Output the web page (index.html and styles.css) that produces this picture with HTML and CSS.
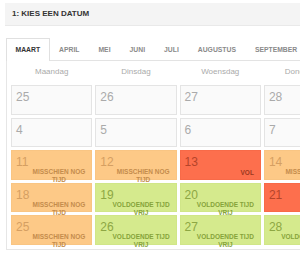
FILE: index.html
```html
<!DOCTYPE html>
<html lang="nl">
<head>
    <meta charset="UTF-8">
    <meta name="viewport" content="width=device-width, initial-scale=1.0">
    <title>Kies een datum</title>
    <link rel="stylesheet" href="styles.css">
</head>
<body>
    <div class="page">
        <div class="step-head">1: KIES EEN DATUM</div>
        <div class="months">
            <ul class="tabs">
                <li class="tab active">MAART</li>
                <li class="tab">APRIL</li>
                <li class="tab">MEI</li>
                <li class="tab">JUNI</li>
                <li class="tab">JULI</li>
                <li class="tab">AUGUSTUS</li>
                <li class="tab">SEPTEMBER</li>
            </ul>
            <div class="panel">
                <div class="cal">
                    <div class="dayname">Maandag</div>
                    <div class="dayname">Dinsdag</div>
                    <div class="dayname">Woensdag</div>
                    <div class="dayname">Donderdag</div>

                    <div class="day off"><span class="num">25</span></div>
                    <div class="day off"><span class="num">26</span></div>
                    <div class="day off"><span class="num">27</span></div>
                    <div class="day off"><span class="num">28</span></div>

                    <div class="day off"><span class="num">4</span></div>
                    <div class="day off"><span class="num">5</span></div>
                    <div class="day off"><span class="num">6</span></div>
                    <div class="day off"><span class="num">7</span></div>

                    <div class="day maybe"><span class="num">11</span><span class="label">MISSCHIEN NOG<br>TIJD</span></div>
                    <div class="day maybe"><span class="num">12</span><span class="label">MISSCHIEN NOG<br>TIJD</span></div>
                    <div class="day full"><span class="num">13</span><span class="label">VOL</span></div>
                    <div class="day maybe"><span class="num">14</span><span class="label">MISSCHIEN NOG<br>TIJD</span></div>

                    <div class="day maybe"><span class="num">18</span><span class="label">MISSCHIEN NOG<br>TIJD</span></div>
                    <div class="day free"><span class="num">19</span><span class="label">VOLDOENDE TIJD<br>VRIJ</span></div>
                    <div class="day free"><span class="num">20</span><span class="label">VOLDOENDE TIJD<br>VRIJ</span></div>
                    <div class="day full"><span class="num">21</span><span class="label">VOL</span></div>

                    <div class="day maybe"><span class="num">25</span><span class="label">MISSCHIEN NOG<br>TIJD</span></div>
                    <div class="day free"><span class="num">26</span><span class="label">VOLDOENDE TIJD<br>VRIJ</span></div>
                    <div class="day free"><span class="num">27</span><span class="label">VOLDOENDE TIJD<br>VRIJ</span></div>
                    <div class="day free"><span class="num">28</span><span class="label">VOLDOENDE TIJD<br>VRIJ</span></div>
                </div>
            </div>
        </div>
    </div>
</body>
</html>
```

FILE: styles.css
```css
body {
    margin: 0;
    overflow: hidden;
    background: #fff;
    font-family: "Liberation Sans", Arial, Helvetica, sans-serif;
}

.page {
    width: 640px;
    padding: 3px 0 0 5px;
}

.step-head {
    height: 22px;
    line-height: 22px;
    padding-left: 7px;
    background-color: #f4f4f4;
    border-bottom: 1px solid #e9e9e9;
    font-size: 8px;
    font-weight: bold;
    color: #333;
}

.months {
    margin: 12px 0 0 1px;
}

.tabs {
    display: flex;
    margin: 0;
    padding: 0;
    list-style: none;
    border-bottom: 1px solid #e3e3e3;
}

.tab {
    height: 22px;
    line-height: 22px;
    padding: 0 8.5px;
    margin-bottom: -1px;
    border: 1px solid transparent;
    border-bottom: none;
    font-size: 6.8px;
    font-weight: bold;
    color: #8a8a8a;
}

.tab.active {
    background: #fff;
    border-color: #e0e0e0;
    color: #333;
}

.panel {
    border: 1px solid #e6e6e6;
    border-top: none;
    padding: 0 4px 4.5px 4px;
}

.cal {
    display: grid;
    grid-template-columns: repeat(4, 81.3px);
    grid-template-rows: 21px repeat(5, 29.5px);
    gap: 3px;
}

.dayname {
    font-size: 8px;
    color: #aaa;
    text-align: center;
    line-height: 22px;
}

.day {
    display: flex;
    flex-direction: column;
    box-sizing: border-box;
    padding: 5px 6px 2px 4px;
    border: 1px solid #e4e4e4;
    background: #fafafa;
}

.num {
    font-size: 12px;
    line-height: 12px;
    color: #aaa;
}

.label {
    margin-top: auto;
    align-self: flex-end;
    text-align: center;
    font-size: 6.5px;
    line-height: 8px;
    font-weight: bold;
}

.maybe {
    background: #fdc987;
    border-color: #f9c583;
}
.maybe .num {
    color: #d59f62;
}
.maybe .label {
    color: #c48c4c;
}

.free {
    background: #d5ea8d;
    border-color: #d0e688;
}
.free .num {
    color: #8da743;
}
.free .label {
    color: #86a33a;
}

.full {
    background: #fd6f4d;
    border-color: #f86a48;
}
.full .num {
    color: #b5442a;
}
.full .label {
    color: #9c381e;
}
```
